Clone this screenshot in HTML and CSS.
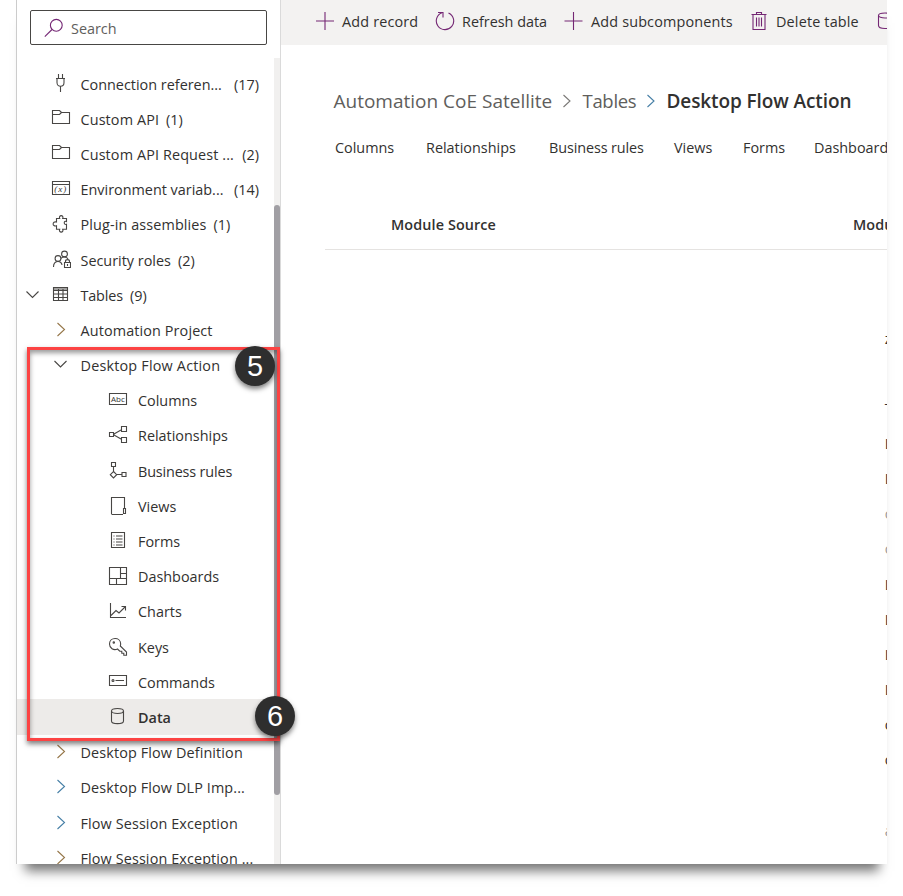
FILE: index.html
```html
<!DOCTYPE html>
<html lang="en">
<head>
<meta charset="utf-8">
<title>Desktop Flow Action</title>
<link rel="stylesheet" href="styles.css">
</head>
<body>
<div class="window">
  <aside class="sidebar">
    <div class="search">
      <svg class="purple" width="20" height="20" viewBox="0 0 20 20"><circle cx="12.3" cy="7.3" r="5.9"/><path d="M8 11.5.8 18.6"/></svg>
      <span>Search</span>
    </div>
    <nav class="tree">
      <div class="row"><svg viewBox="0 0 20 20"><path d="M7.500 0v4M11.500 0v4M5 4.500h9M6 4.500v4c0 5 7 5 7 0v-4M9.500 12v6"/></svg><span class="name">Connection referen...</span><span class="count end">(17)</span></div>
      <div class="row"><svg viewBox="0 0 20 20"><path d="M1.500 14.500V1.500h7l2 2h8v11zM1.500 5.500h7l2-2"/></svg><span class="name mid">Custom API</span><span class="count">(1)</span></div>
      <div class="row"><svg viewBox="0 0 20 20"><path d="M1.500 14.500V1.500h7l2 2h8v11zM1.500 5.500h7l2-2"/></svg><span class="name mid">Custom API Request ...</span><span class="count end">(2)</span></div>
      <div class="row"><svg viewBox="0 0 20 20"><path d="M1.500 2.500h17v13h-17zM1.500 5.500h17"/><text x="3.300" y="13.300" class="glyph vars">(x)</text></svg><span class="name">Environment variab...</span><span class="count end">(14)</span></div>
      <div class="row"><svg viewBox="0 0 20 20"><path d="M5.500 4.500h3.200c-1.600-3.800 4.600-3.800 3 0H15.500v3c-3-1.500-3 4 0 2.800v5h-3.800c1.600 3.800-4.600 3.800-3 0H5.500v-3.500c-4.500 1.200-4.500-5 0-3.800z"/></svg><span class="name mid">Plug-in assemblies</span><span class="count">(1)</span></div>
      <div class="row"><svg viewBox="0 0 20 20"><circle cx="13.500" cy="4" r="2.900"/><circle cx="7" cy="8.500" r="2.900"/><path d="M2.500 17c0-7 8-7 8.500-2M10 8.500c2-2.500 6-2 7.500 1.500M13.500 12.500h6v5h-6zM14.500 12.500v-1c0-2.500 4-2.500 4 0v1M16.500 14v2"/></svg><span class="name">Security roles</span><span class="count">(2)</span></div>
      <div class="row"><svg class="twisty" viewBox="0 0 20 20"><path d="m3.500 6.500 6 6 6-6"/></svg><svg viewBox="0 0 20 20"><path d="M2.500 2.500h14v13h-14zM2.500 4h14M2.500 5.500h14M2.500 9h14M2.500 12.500h14M7.500 4v11.500M12 4v11.500"/></svg><span class="name tight">Tables</span><span class="count">(9)</span></div>
      <div class="row"><svg viewBox="0 0 20 20"><path class="amber" d="m6.500 3 7 6.500-7 6.500"/></svg><span class="name mid">Automation Project</span></div>
      <div class="row"><svg viewBox="0 0 20 20"><path d="m3.500 6 6 6 6-6"/></svg><span class="name wide">Desktop Flow Action</span></div>
      <div class="row child"><svg viewBox="0 0 20 20"><path d="M1.500 3.500h17v11h-17z"/><text x="3" y="11.800" class="glyph">Abc</text></svg><span class="name">Columns</span></div>
      <div class="row child"><svg viewBox="0 0 20 20"><path d="M1.500 7.500h4v4h-4zM13.500 1.500h5v5h-5zM13.500 12.500h5v5h-5zM6 9l7-4M6 10l7 4"/></svg><span class="name">Relationships</span></div>
      <div class="row child"><svg viewBox="0 0 20 20"><path d="M3.500 1.500h4v4h-4zM5.500 5.500v5M5.500 10.500l3.200 3.200-3.200 3.200-3.200-3.200zM9 13.500h5M14 11.500h4v4h-4z"/></svg><span class="name tight">Business rules</span></div>
      <div class="row child"><svg viewBox="0 0 20 20"><path d="M3.500 18V1.500h13v11M3.500 18.500H15M15.500 12.500h2v5h-2z"/></svg><span class="name">Views</span></div>
      <div class="row child"><svg viewBox="0 0 20 20"><path d="M3.500 1.500h13v15h-13zM5.500 5h1M8 5h6.500M5.500 8h1M8 8h6.500M5.500 11h1M8 11h6.500M5.500 14h1M8 14h6.500"/></svg><span class="name">Forms</span></div>
      <div class="row child"><svg viewBox="0 0 20 20"><path d="M1.500 1.500h17v17h-17zM12.500 1.500v11M1.500 12.500h17M12.500 7.500h6M8.500 12.500v6"/></svg><span class="name">Dashboards</span></div>
      <div class="row child"><svg viewBox="0 0 20 20"><path d="M2.500 2v14.500H18M3 14.500l5-5 3 2.500 6.500-6.500M13.500 5.500h4v4"/></svg><span class="name">Charts</span></div>
      <div class="row child"><svg viewBox="0 0 20 20"><path d="M9.500 12c-4 2-8-1-8-5 0-7 11-7.500 11.200 0l-.4 2 6.200 6v3.200h-2.700v-2h-2v-2h-2z"/><circle cx="5.800" cy="5.500" r=".7"/></svg><span class="name">Keys</span></div>
      <div class="row child"><svg viewBox="0 0 20 20"><path d="M1.500 3.500h17v10h-17zM7.500 8.500H16"/><circle cx="5" cy="8.500" r="1"/></svg><span class="name">Commands</span></div>
      <div class="row child selected"><svg viewBox="0 0 20 20"><ellipse cx="9.500" cy="4" rx="6" ry="2.500"/><path d="M3.500 4v10c0 3.500 12 3.500 12 0V4"/></svg><span class="name">Data</span></div>
      <div class="row"><svg viewBox="0 0 20 20"><path class="amber" d="m6.500 3 7 6.500-7 6.500"/></svg><span class="name mid">Desktop Flow Definition</span></div>
      <div class="row"><svg viewBox="0 0 20 20"><path class="blue" d="m6.500 3 7 6.500-7 6.500"/></svg><span class="name mid">Desktop Flow DLP Imp...</span></div>
      <div class="row"><svg viewBox="0 0 20 20"><path class="blue" d="m6.500 3 7 6.500-7 6.500"/></svg><span class="name mid">Flow Session Exception</span></div>
      <div class="row"><svg viewBox="0 0 20 20"><path class="amber" d="m6.500 3 7 6.500-7 6.500"/></svg><span class="name mid">Flow Session Exception ...</span></div>
    </nav>
    <div class="scrollbar"><div class="thumb"></div></div>
  </aside>
  <main class="main">
    <div class="commands">
      <div class="command c1"><svg class="purple" viewBox="0 0 20 20"><path d="M10 1v18M1 10h18"/></svg><span>Add record</span></div>
      <div class="command c2"><svg class="purple" viewBox="0 0 20 20"><path d="M13.500 2A8.700 8.700 0 1 1 7 1.800M3 1.500h5v5"/></svg><span class="refresh">Refresh data</span></div>
      <div class="command c3"><svg class="purple" viewBox="0 0 20 20"><path d="M9.500 1v18M.5 10h18"/></svg><span>Add subcomponents</span></div>
      <div class="command c4"><svg class="purple" viewBox="0 0 20 20"><path d="M2.500 3.500h15M7.500 3V1.500h5V3M4 3.500v15h12v-15M7.500 6.500v9M10 6.500v9M12.500 6.500v9"/></svg><span>Delete table</span></div>
      <div class="command c5"><svg class="purple" viewBox="0 0 20 20"><ellipse cx="9" cy="4.500" rx="6.500" ry="2.500"/><path d="M2.500 4.500v10c0 4 13 4 13 0v-10"/></svg></div>
    </div>
    <div class="crumbs">
      <span class="k1">Automation CoE Satellite</span><svg viewBox="0 0 12 16"><path d="m2.500 2 6.500 6-6.500 6"/></svg><span class="k2">Tables</span><svg viewBox="0 0 12 16"><path class="blue" d="m2.500 2 6.500 6-6.500 6"/></svg><strong class="k3">Desktop Flow Action</strong>
    </div>
    <div class="tabs"><span class="t1">Columns</span><span class="t2">Relationships</span><span class="t3">Business rules</span><span class="t4">Views</span><span class="t5">Forms</span><span class="t6">Dashboards</span></div>
    <div class="table">
      <div class="thead"><span class="h1">Module Source</span><span class="h2">Module</span></div>
      <div class="tbody">
        <div class="cell">z</div><div class="cell"></div><div class="cell">T</div><div class="cell">L</div><div class="cell">L</div><div class="cell faint">c</div><div class="cell faint">c</div><div class="cell">L</div><div class="cell">L</div><div class="cell">L</div><div class="cell">L</div><div class="cell">o</div><div class="cell">o</div><div class="cell"></div><div class="cell faint">a</div>
      </div>
    </div>
  </main>
</div>
<div class="callout"></div>
<div class="badge five">5</div>
<div class="badge six">6</div>
</body>
</html>
```
FILE: styles.css
```css
* { box-sizing: border-box; }
body {
  margin: 0; width: 903px; height: 896px; overflow: hidden; position: relative;
  background: #fff; color: #323130;
  font: 14.4px/20px "Open Sans", "Noto Sans", sans-serif;
  white-space: nowrap;
}
svg { width: 20px; height: 20px; flex: none; fill: none; stroke: #484644; stroke-width: 1.1; }
svg.purple { stroke: #742774; }
.amber { stroke: #957648; }
.blue { stroke: #467fa6; }
.glyph { font: 8px "Open Sans", sans-serif; fill: #323130; stroke: none; }
.vars { font: italic 9px "Liberation Serif", serif; letter-spacing: 1px; }

.window {
  display: flex; width: 870px; height: 864px; margin-left: 17px; background: #fff;
  box-shadow: 0 15px 11px -8px rgba(0,0,0,.54);
}
.sidebar {
  position: relative; width: 265px; height: 864px; overflow: hidden; flex: none;
  border-left: 1px solid #ccc; border-right: 1px solid #dadada; margin-left: -1px;
}
.search {
  display: flex; align-items: center; width: 237px; height: 35px; margin: 10px 0 21px 13px;
  border: 1px solid #484644; border-radius: 2px; padding: 2px 0 0 13px; gap: 7px; color: #605e5c;
}
.search svg { margin-top: -2px; }
.row { position: relative; display: flex; align-items: center; height: 35.2px; padding-left: 34px; }
.row .name { margin-left: 9.5px; padding-top: 2px; }
.row .count { margin-left: 7px; padding-top: 2px; }
.row .count.end { margin-left: auto; margin-right: 21px; }
.row .wide { letter-spacing: .19px; }
.row .mid { letter-spacing: .12px; }
.row .tight { letter-spacing: -.15px; }
.row.child { padding-left: 91px; }
.row.child .name { margin-left: 10px; }
.twisty { margin-left: -28px; margin-right: 8px; }
.selected { background: #edebe9; }
.selected .name { font-weight: 600; }
.scrollbar { position: absolute; top: 58px; right: 0; bottom: 0; width: 6px; padding-top: 147px; background: #f1f0ef; }
.thumb { height: 590px; border-radius: 3px; background: #a19fa4; }

.main { flex: 1; min-width: 0; overflow: hidden; }
.commands { display: flex; height: 45px; padding-left: 34px; background: #f3f2f1; }
.command { display: flex; height: 41px; align-items: center; gap: 7px; flex: none; }
.command span { padding-top: 2px; letter-spacing: .17px; }
.command .refresh { letter-spacing: 0; }
.c1 { width: 120px; }
.c2 { width: 129px; }
.c3 { width: 185px; }
.c4 { width: 127px; }
.crumbs { display: flex; align-items: center; height: 30px; margin: 41px 0 0 52.5px; font-size: 19px; line-height: 26px; color: #605e5c; }
.crumbs svg { width: 12px; height: 16px; stroke: #7a7876; }
.k1 { width: 227.5px; }
.k2 { width: 62px; margin-left: 9.5px; font-size: 18.5px; letter-spacing: -.3px; margin-top: -1px; }
.k3 { margin-left: 10px; color: #323130; font-weight: 600; letter-spacing: -.1px; }
.tabs { display: flex; height: 30px; margin: 16px 0 0 54px; align-items: center; }
.tabs span { flex: none; padding-top: 2px; }
.t1 { width: 91px; }
.t2 { width: 123px; }
.t3 { width: 125px; }
.tabs .t3 { letter-spacing: -.1px; }
.t4 { width: 69px; }
.t5 { width: 71px; }
.table { margin: 37px 0 0 44px; }
.thead { display: flex; height: 51px; align-items: center; border-bottom: 1px solid #e5e3e1; padding: 2px 0 0 66px; font-weight: 600; }
.thead span { flex: none; letter-spacing: .1px; }
.h1 { width: 462px; }
.tbody { padding: 70.500px 0 0 559.8px; }
.cell { height: 35.17px; line-height: 35px; width: 80px; }
.faint { color: #999; }

.callout {
  position: absolute; left: 27px; top: 347px; width: 253px; height: 394px;
  border: 3px solid #fc4343; box-shadow: 0 3px 5px rgba(0,0,0,.5), inset 0 3px 5px rgba(0,0,0,.4);
}
.badge {
  position: absolute; width: 40px; height: 40px; border-radius: 50%; background: #2e2e2e; color: #fff;
  font: 29px/41px "Liberation Sans", sans-serif; text-align: center; box-shadow: 0 3px 5px rgba(0,0,0,.5);
}
.five { left: 235px; top: 346px; }
.six { left: 255px; top: 696px; }
```
